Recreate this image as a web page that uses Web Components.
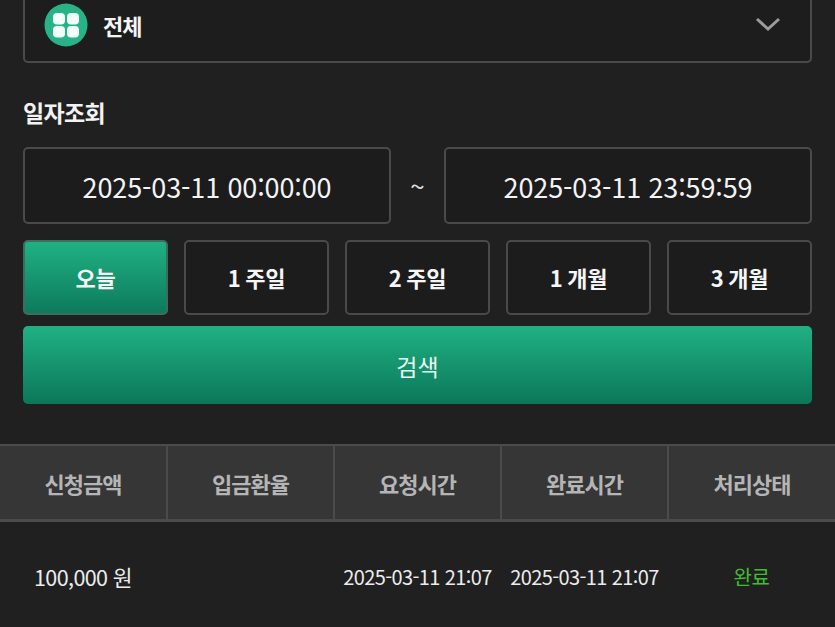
<!DOCTYPE html>
<html lang="ko"><head><meta charset="utf-8">
<style>
html,body{margin:0;padding:0;background:#202020;}
body{width:835px;height:627px;overflow:hidden;font-family:"Noto Sans CJK KR","Noto Sans",sans-serif;color:#fff;}
</style></head><body>
<history-page></history-page>
<script>
function def(name, html){
  customElements.define(name, class extends HTMLElement{
    constructor(){super();this.attachShadow({mode:'open'}).innerHTML=html;}
  });
}
def('category-select',`<style>
:host{display:flex;align-items:center;justify-content:space-between;box-sizing:border-box;height:63px;margin:0 23px;padding:0 29px 12px 19px;border:2px solid #4a4a4a;border-top:none;border-radius:0 0 5px 5px;background:#1d1d1d}
.l{display:flex;align-items:center;gap:15px;font-size:22px;font-weight:700;letter-spacing:-1px;color:#f4f4f4}
svg{display:block}
</style><div class="l"><svg width="44" height="44" viewBox="0 0 44 44"><circle cx="22" cy="22" r="21.5" fill="#27b387"/><g fill="#f2fff9"><rect x="9" y="10" width="12" height="11.500" rx="4"/><rect x="23" y="10" width="12" height="11.500" rx="4"/><rect x="9" y="23" width="12" height="11.500" rx="4"/><rect x="23" y="23" width="12" height="11.500" rx="4"/></g></svg><slot></slot></div>
<svg width="26" height="16" viewBox="0 0 26 16"><path d="M2 2l11 10L24 2" fill="none" stroke="#9c9c9c" stroke-width="3"/></svg>`);
def('section-label',`<style>:host{display:block;margin:33px 23px 0;height:32px;line-height:32px;font-size:23px;font-weight:700;letter-spacing:-.7px;color:#f2f2f2}</style><slot></slot>`);
def('date-range',`<style>:host{display:flex;align-items:center;margin:19px 23px 0}
.t{flex:0 0 53px;text-align:center;font-size:26px;color:#ddd;line-height:1}</style><slot name="a"></slot><span class="t">~</span><slot name="b"></slot>`);
def('date-field',`<style>:host{display:flex;align-items:center;justify-content:center;box-sizing:border-box;width:368px;height:77px;border:2px solid #4a4a4a;border-radius:5px;background:#1c1c1c;font-size:27px;color:#f4f4f4;padding-top:1px;letter-spacing:-.12px}</style><slot></slot>`);
def('period-row',`<style>:host{display:grid;grid-template-columns:repeat(5,145px);column-gap:16px;margin:16px 23px 0}</style><slot></slot>`);
def('period-btn',`<style>:host{display:flex;align-items:center;justify-content:center;box-sizing:border-box;height:75px;border:2px solid #4a4a4a;border-radius:5px;background:#1c1c1c;font-size:22px;font-weight:700;color:#f6f6f6;word-spacing:-1px;letter-spacing:-.3px;padding-bottom:2px}
:host([active]){border-color:#3f6d5d;background:linear-gradient(#20b183,#0d7a5d)}</style><slot></slot>`);
def('search-btn',`<style>:host{display:flex;align-items:center;justify-content:center;height:78px;margin:11px 23px 0;border-radius:5px;background:linear-gradient(#20b183,#0b7759);font-size:23px;color:#eafaf4;padding-top:1px;box-sizing:border-box}</style><slot></slot>`);
def('data-table',`<style>:host{display:block;margin-top:40px}</style><slot></slot>`);
def('table-head',`<style>:host{display:grid;grid-template-columns:168px 167px 167px 167px 166px;box-sizing:border-box;height:78px;background:#363636;border-top:2px solid #4b4b4b;border-bottom:3px solid #4b4b4b}</style><slot></slot>`);
def('head-cell',`<style>:host{display:flex;align-items:center;justify-content:center;box-sizing:border-box;border-right:2px solid #4b4b4b;font-size:22px;font-weight:700;letter-spacing:-1px;color:#b5b5b5}
:host(:last-child){border-right:none}</style><slot></slot>`);
def('table-row',`<style>:host{display:grid;grid-template-columns:168px 167px 167px 167px 166px;height:112px}</style><slot></slot>`);
def('row-cell',`<style>:host{display:flex;align-items:center;justify-content:center;font-size:20px;color:#ececec;white-space:nowrap;letter-spacing:-.6px;padding:0 2px 3px 0}
:host([tone=ok]){color:#41bb32;letter-spacing:-.5px;padding-right:1px}:host([tone=amt]){letter-spacing:-.6px;font-size:21.500px;justify-content:flex-start;padding-left:34px}</style><slot></slot>`);
def('history-page',`<style>:host{display:block}</style>
<category-select>전체</category-select>
<section-label>일자조회</section-label>
<date-range><date-field slot="a">2025-03-11 00:00:00</date-field><date-field slot="b">2025-03-11 23:59:59</date-field></date-range>
<period-row><period-btn active>오늘</period-btn><period-btn>1 주일</period-btn><period-btn>2 주일</period-btn><period-btn>1 개월</period-btn><period-btn>3 개월</period-btn></period-row>
<search-btn>검색</search-btn>
<data-table>
<table-head><head-cell>신청금액</head-cell><head-cell>입금환율</head-cell><head-cell>요청시간</head-cell><head-cell>완료시간</head-cell><head-cell>처리상태</head-cell></table-head>
<table-row><row-cell tone="amt">100,000 원</row-cell><row-cell></row-cell><row-cell>2025-03-11 21:07</row-cell><row-cell>2025-03-11 21:07</row-cell><row-cell tone="ok">완료</row-cell></table-row>
</data-table>`);
</script>
</body></html>
